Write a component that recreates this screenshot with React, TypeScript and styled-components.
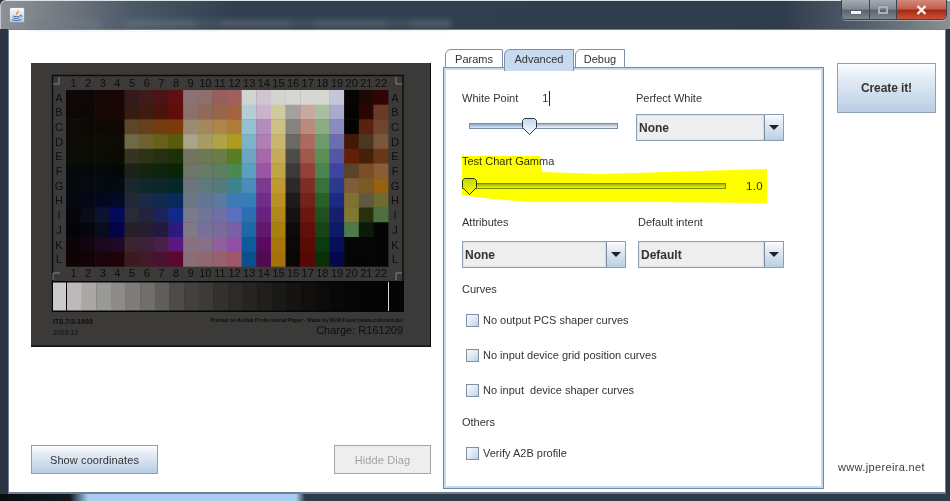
import React from "react";
import styled, { createGlobalStyle } from "styled-components";

const Global = createGlobalStyle`
  html, body { margin: 0; padding: 0; background: #2e3b4b; }
  * { box-sizing: border-box; }
`;

const Win = styled.div`
  width: 950px; height: 501px; overflow: hidden; position: relative;
  display: grid; grid-template-rows: 29px 465px 7px;
  background: #2b3644;
  font-family: "Liberation Sans", Arial, sans-serif; font-size: 11px; color: #333;
`;
const TitleBar = styled.div`
  position: relative; display: flex; justify-content: space-between; align-items: flex-start;
  padding-left: 8px;
  border-top: 1px solid #dfe3e6;
  border-left: 1px solid #c5c9cd;
  border-top-left-radius: 6px;
  background: linear-gradient(90deg, #8d9196 0, #7d838a 40px, #4c5967 130px, #323f4f 230px, #2f3c4c 780px, #515d69 860px, #8b9197 950px);
`;
const TitleGlow = styled.div`
  position: absolute; left: 30px; top: 19px; width: 420px; height: 7px;
  background: repeating-linear-gradient(90deg, #6f7c8a 0 70px, #566372 70px 95px);
  filter: blur(3px); opacity: .55;
`;
const JavaBadge = styled.div`
  margin-top: 6px; width: 16px; height: 16px; border-radius: 2px; position: relative;
  background: linear-gradient(180deg, #fbfbfb, #b9cde0);
  border: 1px solid #8a97a6;
  display: flex;
`;
const WinControls = styled.div`
  display: grid; grid-template-columns: 28px 27px 49px; height: 20px; margin-top: -1px; margin-right: 3px;
  border: 1px solid #39434f; border-top: 0; border-radius: 0 0 5px 5px; overflow: hidden;
  box-shadow: 0 1px 0 rgba(255,255,255,.35);
`;
const WinBtn = styled.div<{ $kind: "min" | "max" | "close" }>`
  display: flex; align-items: center; justify-content: center;
  border-right: ${(p) => (p.$kind === "close" ? "0" : "1px solid #3b4652")};
  background: ${(p) =>
    p.$kind === "close"
      ? "linear-gradient(180deg,#d4897c 0,#c2604c 45%,#a92a12 55%,#c85238 100%)"
      : "linear-gradient(180deg,#a5abb1 0,#838b93 45%,#5a6570 55%,#7c868f 100%)"};
`;
const MinGlyph = styled.div`
  width: 10px; height: 3px; margin-top: 5px; background: #f3f5f7; box-shadow: 0 0 1px #333;
`;
const MaxGlyph = styled.div`
  width: 10px; height: 8px; border: 2px solid #aab1b8; box-shadow: 0 0 1px #666;
`;
const CloseGlyph = styled.svg`
  width: 11px; height: 10px;
`;

const Client = styled.div`
  margin: 0 4px 0 8px; background: #fff;
  border: 1px solid #6f8094; border-bottom-width: 2px; 
  display: grid; grid-template-columns: 400px 381px 100px; column-gap: 12px;
  padding: 19px 0 3px 22px;
`;
const LeftCol = styled.div`
  display: flex; flex-direction: column; justify-content: space-between; padding: 14px 0 15px;
`;
const Chart = styled.svg`
  display: block; width: 400px; height: 284px;
`;
const ButtonRow = styled.div`
  display: flex; justify-content: space-between;
`;
const Button = styled.button<{ $w: number; $h: number; $bold?: boolean }>`
  width: ${(p) => p.$w}px; height: ${(p) => p.$h}px; padding: 0;
  font-family: inherit; color: #333;
  font-size: ${(p) => (p.$bold ? 12 : 11)}px;
  font-weight: ${(p) => (p.$bold ? 700 : 400)};
  letter-spacing: ${(p) => (p.$bold ? "-.1px" : ".1px")};
  border: 1px solid #7a8ca3; outline: 1px solid #8fa0b5; outline-offset: -1px;
  background: linear-gradient(180deg, #fdfeff 0, #e6eef6 25%, #b8cee5 100%);
  &:disabled { color: #a3a3a3; background: #eee; border-color: #999; outline-color: #a5a5a5; }
`;

const Middle = styled.div`
  display: flex; flex-direction: column;
`;
const Tabs = styled.div`
  display: flex; gap: 1px; padding-left: 2px; height: 18px; position: relative; z-index: 1;
`;
const Tab = styled.div<{ $w: number; $on?: boolean }>`
  width: ${(p) => p.$w}px; height: ${(p) => (p.$on ? 22 : 19)}px;
  padding-top: 3px; text-align: center; line-height: 13px;
  border: 1px solid #7f90a6; border-top-left-radius: 6px;
  border-bottom: ${(p) => (p.$on ? "0" : "1px solid #7f90a6")};
  background: ${(p) => (p.$on ? "#c8daef" : "#fff")};
`;
const Panel = styled.div`
  position: relative; height: 422px;
  border: 1px solid #7087a8; box-shadow: inset 0 0 0 2px #c6d9ee;
  padding: 23px 0 0 18px;
`;
const Highlight = styled.svg`
  position: absolute; left: 16px; top: 86px; width: 310px; height: 52px;
  mix-blend-mode: multiply; pointer-events: none;
`;
const TopGrid = styled.div`
  display: grid; grid-template-columns: 174px 148px; row-gap: 9px;
`;
const BottomGrid = styled.div`
  display: grid; grid-template-columns: 164px 146px; column-gap: 12px; row-gap: 12px; margin-top: 21px;
`;
const Label = styled.div<{ $top?: number }>`
  height: 14px; line-height: 14px; white-space: pre;
  margin-top: ${(p) => p.$top ?? 0}px;
`;
const WhiteLabel = styled(Label)`
  display: flex;
`;
const Value = styled.span`
  margin-left: 24px; padding-right: 2px; border-right: 1px solid #222; width: 8px; height: 15px;
`;
const SliderWrap = styled.div<{ $left: number; $width: number; $top: number }>`
  position: relative; height: 16px;
  margin: ${(p) => `${p.$top}px 0 0 ${p.$left}px`}; width: ${(p) => p.$width}px;
`;
const Track = styled.div`
  position: absolute; left: 0; right: 0; top: 5px; height: 6px;
  border: 1px solid #7e8ea2; background: linear-gradient(180deg, #a3b2c2, #f2f5f9);
`;
const TrackFill = styled.div`
  height: 100%; background: linear-gradient(180deg, #83a3c9, #dde8f3);
`;
const Thumb = styled.svg<{ $x: number }>`
  position: absolute; top: 0; left: ${(p) => p.$x}px; width: 15px; height: 17px;
`;
const GammaRow = styled.div`
  display: flex; align-items: center; margin-top: 10px;
`;
const GammaValue = styled.span`
  margin-left: 20px; letter-spacing: .3px; font-size: 11.5px;
`;
const Combo = styled.div<{ $w?: number }>`
  height: 27px; display: flex; width: ${(p) => p.$w ?? 148}px;
  border: 1px solid #7c8da3; outline: 1px solid #8e9eb2; outline-offset: -1px;
  background: #eee;
`;
const ComboText = styled.div`
  flex: 1; padding-left: 1px; line-height: 25px; font-size: 12px; font-weight: 700;
  border: 1px solid #dfe7f0; border-right: 1px solid #cfdbe8;
`;
const ComboArrow = styled.div`
  width: 19px; display: flex; align-items: center; justify-content: center;
  border-left: 1px solid #7c8da3;
  background: linear-gradient(180deg, #fbfcfe 0, #e4ecf5 30%, #b9cfe5 100%);
  &::after {
    content: ""; border-left: 5px solid transparent; border-right: 5px solid transparent; border-top: 5px solid #222;
  }
`;
const Check = styled.label<{ $top: number }>`
  display: flex; align-items: center; gap: 4px; height: 14px; margin: ${(p) => p.$top}px 0 0 4px;
  white-space: pre;
`;
const Box = styled.span`
  width: 13px; height: 13px; border: 1px solid #7f90a5; flex: none;
  background: linear-gradient(135deg, #f5f8fb 0, #e3ebf4 45%, #bed1e5 100%);
`;
const RightCol = styled.div`
  display: flex; flex-direction: column; justify-content: space-between; padding: 14px 0 15px 1px;
`;
const Site = styled.div`
  padding-left: 1px; font-size: 11px; letter-spacing: .35px; line-height: 14px; color: #3c3c3c; white-space: nowrap;
`;
const BottomStrip = styled.div`
  background: linear-gradient(90deg, #0a0c10 0, #141a20 70px, #a9cdf0 88px, #a9cdf0 296px, #2e3b4b 305px, #2e3b4b 100%);
`;

const dark4: string[][] = [
  ["#0e0808", "#0d0707", "#170606", "#180505"],
  ["#0e0705", "#0d0705", "#150705", "#170604"],
  ["#0e0a05", "#0c0904", "#100903", "#110803"],
  ["#0d0c06", "#0c0b05", "#0f0c04", "#0e0b03"],
  ["#0c0d07", "#0a0c05", "#0b0c04", "#0a0c03"],
  ["#06090a", "#04090a", "#04090a", "#030909"],
  ["#05090e", "#040a10", "#030b12", "#020a12"],
  ["#050810", "#040816", "#030820", "#020a28"],
  ["#05060c", "#0a0c18", "#0c1230", "#040a5a"],
  ["#030308", "#06060f", "#090c1a", "#03034a"],
  ["#0c0508", "#130510", "#1c0820", "#200828"],
  ["#0e0406", "#120306", "#1c040c", "#200308"],
];
const rest: string[][] = [
  ["#341a1a","#421a1c","#4c1318","#600f12","#8a7473","#8f6e6d","#97605f","#a35f5f","#cfd5d2","#cfc4cf","#d3d4cf","#d6d7d3","#d6d7d3","#d7d8d2","#c5c7d8","#060404","#1c0805","#310504"],
  ["#351c13","#3f1c10","#4a1409","#610d09","#8a7268","#90695a","#97654a","#a4623f","#b6cdd4","#c9b4cc","#d0cb9d","#a3a09e","#c8a8a0","#a8c0a0","#a9aacc","#050403","#280703","#6a3a26"],
  ["#5d4527","#68401c","#733c11","#7e3a0a","#9a8b72","#a6885f","#ae8649","#ae7e38","#96c1d0","#b48cbc","#cdc084","#86837f","#bb8a7e","#8cad82","#8b8cbe","#040302","#5a2110","#6e4630"],
  ["#716846","#6e6330","#66601a","#5a5a0c","#aca489","#a89c66","#ada44a","#ad9c20","#7fb1c9","#af7fb5","#c8b570","#6b6966","#ad6b60","#6e9a6c","#6c6fae","#441808","#4c3820","#7a563a"],
  ["#353420","#2e3216","#243010","#1c3008","#75735f","#6f7855","#6d7c45","#5a7c24","#6ca6c4","#a568a8","#c4ac5a","#4e4c4a","#9f5a4a","#5c8f58","#5458a2","#641e08","#42200c","#683818"],
  ["#1c2218","#14240f","#0f240c","#0c2406","#6f7569","#687b65","#5f7d60","#4a8a50","#5ca0bf","#9a55a5","#bfa445","#3c3a38","#924038","#4a8550","#3d45a0","#5a4428","#7c4e28","#8a5c38"],
  ["#1a272b","#10282c","#0d2626","#04282a","#6c757b","#5f7a7e","#58797b","#3e848c","#4a8db8","#7e3a90","#c09a30","#2c2a28","#7c2e25","#39703c","#2a3a8e","#805c38","#7c5a24","#986010"],
  ["#20283a","#182a45","#102a4d","#062a5c","#6c7786","#627795","#5a7a9f","#3f7ab8","#347fb5","#722d8a","#b99022","#1c1b1a","#722218","#2a6028","#1c2a85","#807034","#605840","#6c6c30"],
  ["#2a2a36","#22243f","#1c225a","#102a88","#7a7a8e","#707598","#6c70a5","#5a70c0","#2a70b0","#6a2080","#b08818","#141312","#6a1810","#205020","#141f70","#807a30","#283010","#4c7040"],
  ["#252028","#241e30","#241a40","#2c1a80","#7f7a88","#78709a","#7a6c9a","#7b60a8","#1f68a8","#62186c","#a98010","#0c0b0a","#601008","#184418","#0c1868","#4f7a4a","#0a1c06","#050505"],
  ["#3a2430","#3a2038","#4a2048","#5c1880","#887080","#86708a","#8e609c","#9050a8","#0f5a9a","#5c0a60","#a8750c","#0a0908","#5c0a04","#0c3a10","#050f5a","#060606","#060606","#050505"],
  ["#3a1c20","#421a28","#4c1030","#5a0830","#8a6e76","#8f6870","#96606c","#a05868","#0a508c","#520a50","#a87008","#090807","#580804","#0a3008","#04084a","#050505","#050505","#050505"],
];
const greys = ["#bcb9b8","#a9a8a6","#9a9997","#8d8c8a","#7e7d7b","#706f6d","#5f5e5c","#4c4b49","#42413f","#3c3b39","#33322f","#2c2b29","#262523","#201f1d","#1a1918","#151413","#100f0e","#0c0b0a","#090808","#060606","#050505","#040404"];
const P = 14.64;
const Q = 14.7;
const letters = "ABCDEFGHIJKL".split("");
const chartText = { fontFamily: "'Liberation Sans', Arial, sans-serif", fill: "#0e0e0e" };

const ChartPicture = () => (
  <Chart viewBox="0 0 400 284">
    <rect width="400" height="284" fill="#3b3a38" />
    <rect x="399" width="1" height="284" fill="#0c0c0c" />
    <rect y="282.5" width="400" height="1.5" fill="#111" />
    <g style={{ filter: "blur(0.35px)" }}>
      <path d="M21.5 248V12.5H372V248" fill="none" stroke="#0c0c0c" strokeWidth="1.4" />
      {letters.map((_, r) =>
        [...dark4[r], ...rest[r]].map((c, i) => (
          <rect key={`${r}-${i}`} x={35 + i * P} y={27 + r * Q} width={P + 0.3} height={Q + 0.3} fill={c} />
        ))
      )}
      {letters.map((l, r) => (
        <g key={l} {...chartText} fontSize="11" textAnchor="middle">
          <text x="28" y={38.5 + r * Q}>{l}</text>
          <text x="364" y={38.5 + r * Q}>{l}</text>
        </g>
      ))}
      {greys.map((_, i) => (
        <g key={i} {...chartText} fontSize="11" textAnchor="middle">
          <text x={42.5 + i * P} y="23.5">{i + 1}</text>
          <text x={42.5 + i * P} y="213.5">{i + 1}</text>
        </g>
      ))}
      <rect x="21" y="218" width="352" height="31" fill="#050505" />
      <rect x="22" y="219.5" width="13" height="28" fill="#c9ccc8" />
      {greys.map((c, i) => (
        <rect key={c} x={36 + i * P} y="219.5" width={P + 0.3} height="28" fill={c} />
      ))}
      <rect x="357" y="219" width="1" height="29" fill="#d8d8d8" />
      <path d="M22 21h6v-7M365 14v7h6M22 217v-7h7M365 217v-7h6" fill="none" stroke="#8e8c88" strokeWidth="0.9" />
      <g {...chartText}>
        <text x="22" y="261" fontSize="7" fontWeight="700">IT8.7/2-1993</text>
        <text x="22" y="272" fontSize="7">2016:12</text>
        <text x="372" y="259" fontSize="5.25" fontWeight="700" textAnchor="end">Printed on Kodak Professional Paper  -  Made by Wolf Faust (www.coloraid.de)</text>
        <text x="372" y="271" fontSize="11" textAnchor="end">Charge: R161209</text>
      </g>
    </g>
  </Chart>
);

const ThumbShape = ({ x }: { x: number }) => (
  <Thumb $x={x} viewBox="0 0 15 17">
    <defs>
      <linearGradient id="th" x1="0" y1="0" x2="0" y2="1">
        <stop offset="0" stopColor="#c3d6ea" />
        <stop offset="1" stopColor="#ffffff" />
      </linearGradient>
    </defs>
    <path d="M2.5.5h10l2 2v7l-7 7-7-7v-7z" fill="url(#th)" stroke="#2c3a4a" />
  </Thumb>
);

export default function App() {
  return (
    <Win>
      <Global />
      <TitleBar>
        <TitleGlow />
        <JavaBadge>
          <svg width="14" height="14" viewBox="0 0 14 14">
            <path d="M8 .8C9.4 3 5.2 4.2 6.3 7.4 6.9 5.6 10 5 8 .8z" fill="#e8792a" />
            <path d="M3 8c2 .9 5.4.9 7 0M3.5 9.9c2 .7 4.4.7 6 0M1.8 11.6c3.2 1.2 7.6 1.2 10-.3M10 7.4c1.8-.7 2.6 1 .7 1.9" fill="none" stroke="#3b6fa8" strokeWidth="1" />
          </svg>
        </JavaBadge>
        <WinControls>
          <WinBtn $kind="min"><MinGlyph /></WinBtn>
          <WinBtn $kind="max"><MaxGlyph /></WinBtn>
          <WinBtn $kind="close">
            <CloseGlyph viewBox="0 0 11 10">
              <path d="M1.5 1l8 8M9.5 1l-8 8" stroke="#f6f6f6" strokeWidth="2.4" />
            </CloseGlyph>
          </WinBtn>
        </WinControls>
      </TitleBar>

      <Client>
        <LeftCol>
          <ChartPicture />
          <ButtonRow>
            <Button $w={127} $h={29}>Show coordinates</Button>
            <Button $w={97} $h={29} disabled>Hidde Diag</Button>
          </ButtonRow>
        </LeftCol>

        <Middle>
          <Tabs>
            <Tab $w={58}>Params</Tab>
            <Tab $w={70} $on>Advanced</Tab>
            <Tab $w={50}>Debug</Tab>
          </Tabs>
          <Panel>
            <TopGrid>
              <WhiteLabel>White Point<Value>1</Value></WhiteLabel>
              <Label>Perfect White</Label>
              <SliderWrap $left={7} $width={149} $top={4}>
                <Track><TrackFill style={{ width: "41%" }} /></Track>
                <ThumbShape x={53} />
              </SliderWrap>
              <Combo><ComboText>None</ComboText><ComboArrow /></Combo>
            </TopGrid>
            <Label $top={13}>Test Chart Gamma</Label>
            <GammaRow>
              <SliderWrap $left={0} $width={264} $top={0}>
                <Track />
                <ThumbShape x={0} />
              </SliderWrap>
              <GammaValue>1.0</GammaValue>
            </GammaRow>
            <BottomGrid>
              <Label>Attributes</Label>
              <Label>Default intent</Label>
              <Combo $w={164}><ComboText>None</ComboText><ComboArrow /></Combo>
              <Combo $w={146}><ComboText>Default</ComboText><ComboArrow /></Combo>
            </BottomGrid>
            <Label $top={14}>Curves</Label>
            <Check $top={17}><Box />No output PCS shaper curves</Check>
            <Check $top={21}><Box />No input device grid position curves</Check>
            <Check $top={21}><Box />No input  device shaper curves</Check>
            <Label $top={18}>Others</Label>
            <Check $top={17}><Box />Verify A2B profile</Check>
            <Highlight viewBox="0 0 310 52">
              <path d="M2 2H80L82 18 140 20 307 15V49L190 48 70 48 23 44 2 41V14z" fill="#ffff00" />
            </Highlight>
          </Panel>
        </Middle>

        <RightCol>
          <Button $w={99} $h={50} $bold>Create it!</Button>
          <Site>www.jpereira.net</Site>
        </RightCol>
      </Client>
      <BottomStrip />
    </Win>
  );
}
